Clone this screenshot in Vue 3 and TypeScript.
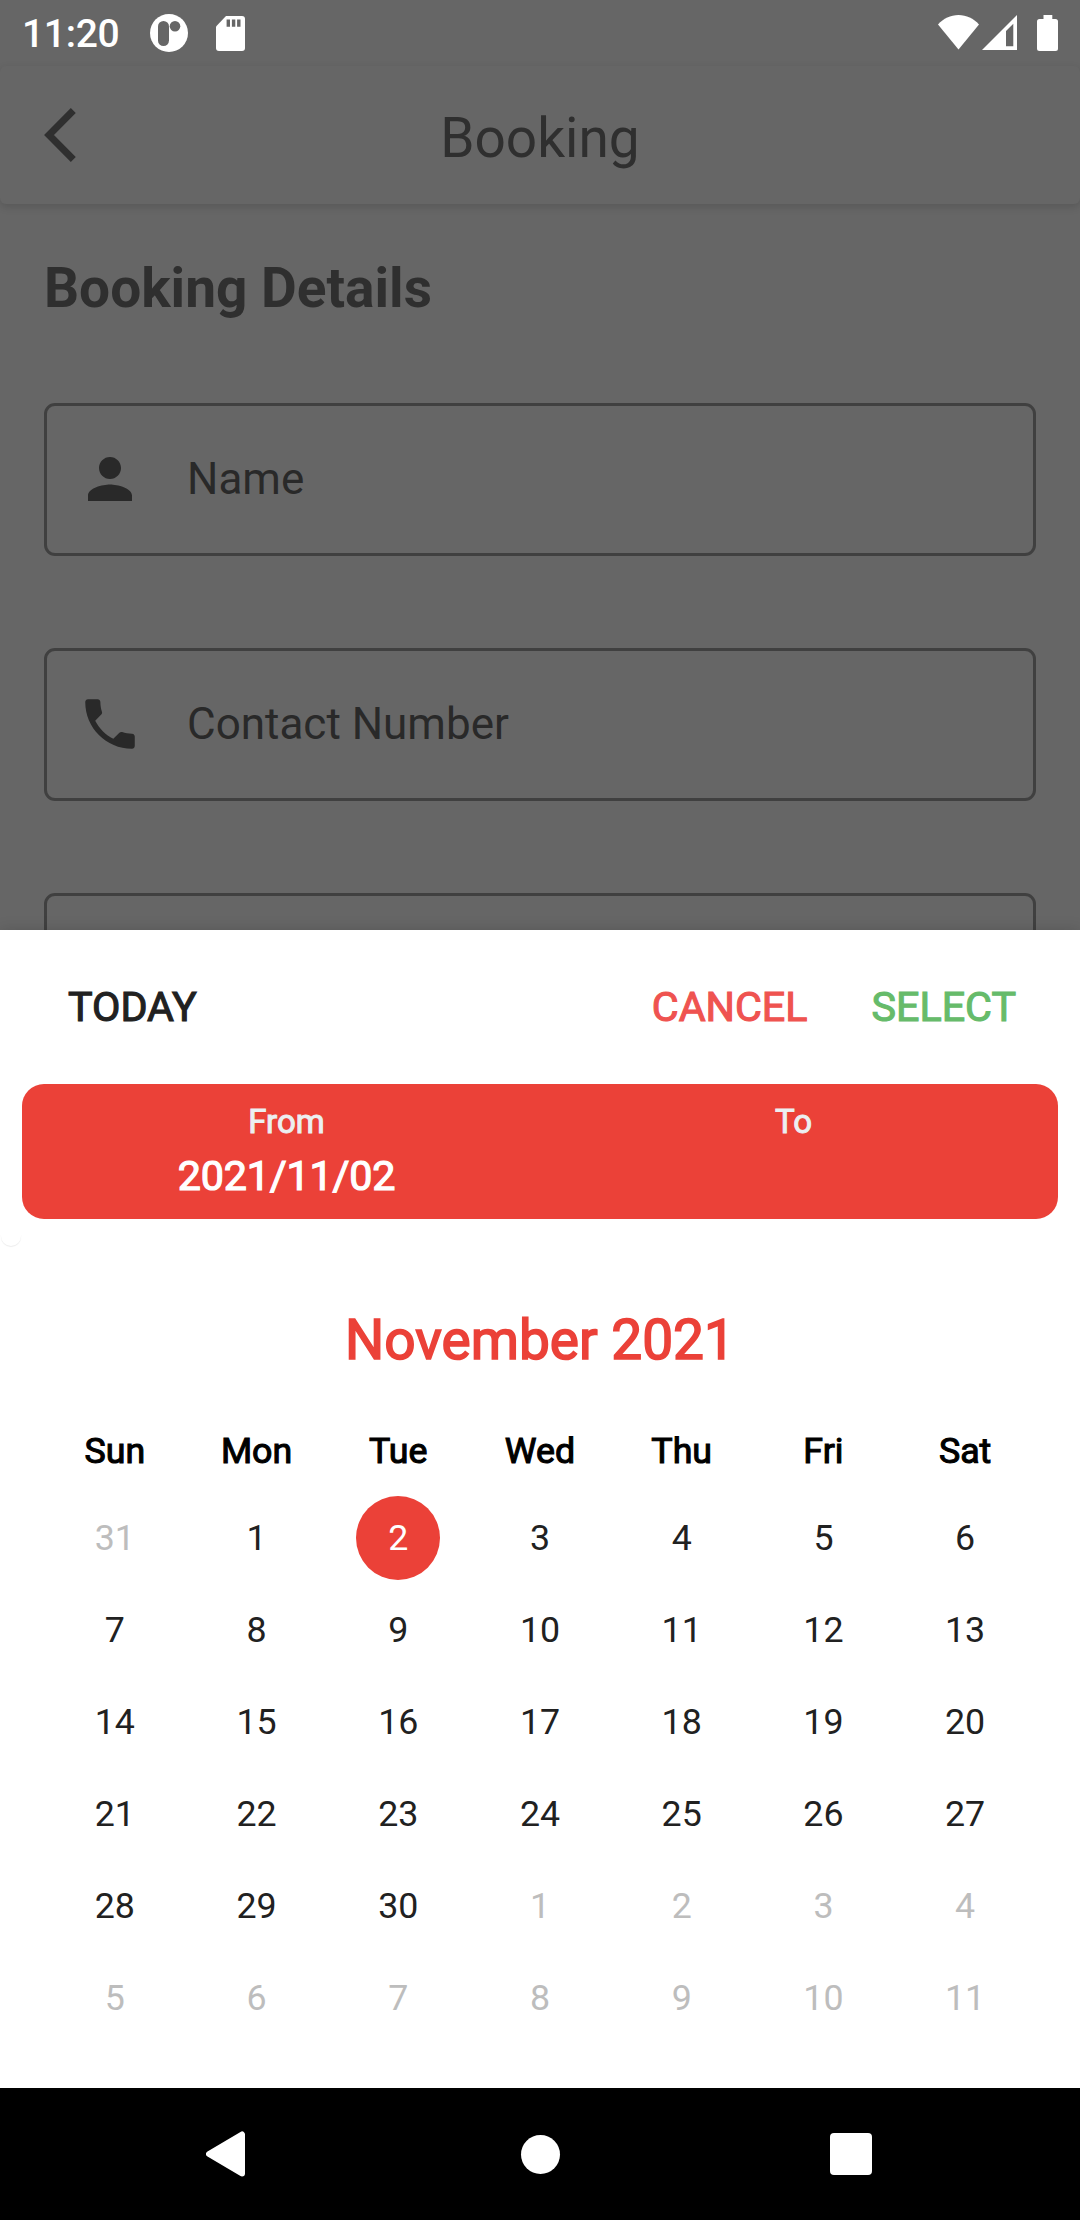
<script setup lang="ts">
interface Day {
  label: number
  muted?: boolean
  selected?: boolean
}

const weekdays: string[] = ['Sun', 'Mon', 'Tue', 'Wed', 'Thu', 'Fri', 'Sat']

const leading: Day[] = [{ label: 31, muted: true }]
const current: Day[] = Array.from({ length: 30 }, (_, i) => ({ label: i + 1, selected: i + 1 === 2 }))
const trailing: Day[] = Array.from({ length: 11 }, (_, i) => ({ label: i + 1, muted: true }))
const days: Day[] = [...leading, ...current, ...trailing]
</script>

<template>
  <div class="screen">
    <div class="status">
      <span class="time">11:20</span>
      <svg class="app-dot" width="38" height="38" viewBox="0 0 38 38">
        <circle cx="19" cy="19" r="19" fill="#fff" />
        <rect x="8" y="7" width="11" height="25" rx="5.5" fill="#666" />
        <circle cx="25" cy="12.3" r="5.3" fill="#666" />
      </svg>
      <svg class="sd" width="29" height="35" viewBox="0 0 29 35">
        <path d="M10 0H26a3 3 0 0 1 3 3V32a3 3 0 0 1-3 3H3a3 3 0 0 1-3-3V10.500Z" fill="#fff" />
        <path d="M10.600 3.500h3.400v7.300h-3.400zM15.900 3.500h3.400v7.300h-3.400zM21.100 3.500h3.400v7.300h-3.400z" fill="#666" />
      </svg>
      <span class="spacer"></span>
      <svg class="wifi" width="41" height="35" viewBox="0 0 41 35">
        <path d="M0 9.500C5.500 3.500 12.500 0 20.500 0S35.500 3.500 41 9.500L20.500 34.500Z" fill="#fff" />
      </svg>
      <svg class="signal" width="35" height="35" viewBox="0 0 35 35">
        <path fill-rule="evenodd" d="M35 0V35H0ZM31.300 8.800L24 16.100V31.200H31.300Z" fill="#fff" />
      </svg>
      <svg class="battery" width="21" height="36" viewBox="0 0 21 36">
        <path d="M6.500 0H15.300V4H18.500A2.500 2.500 0 0 1 21 6.500V33.500A2.500 2.500 0 0 1 18.500 36H2.500A2.500 2.500 0 0 1 0 33.500V6.500A2.500 2.500 0 0 1 2.500 4H6.500Z" fill="#fff" />
      </svg>
    </div>

    <header class="header">
      <svg class="back" width="32" height="54" viewBox="0 0 32 54">
        <path d="M29.300 2.500L5 27L29.300 51.500" fill="none" stroke="#2f2f2f" stroke-width="7" />
      </svg>
      <h1 class="title">Booking</h1>
    </header>

    <main class="form">
      <h2 class="heading">Booking Details</h2>
      <div class="field">
        <svg width="66" height="66" viewBox="0 0 24 24" fill="#292929">
          <path d="M12 12c2.210 0 4-1.790 4-4s-1.790-4-4-4-4 1.790-4 4 1.790 4 4 4zm0 2c-2.670 0-8 1.340-8 4v2h16v-2c0-2.660-5.330-4-8-4z" />
        </svg>
        <span>Name</span>
      </div>
      <div class="field">
        <svg width="66" height="66" viewBox="0 0 24 24" fill="#292929">
          <path d="M6.620 10.790c1.440 2.830 3.760 5.140 6.590 6.590l2.200-2.200c.27-.27.67-.36 1.020-.24 1.120.37 2.330.57 3.570.57.55 0 1 .45 1 1V20c0 .55-.45 1-1 1-9.390 0-17-7.610-17-17 0-.55.45-1 1-1h3.500c.55 0 1 .45 1 1 0 1.250.2 2.450.57 3.570.11.35.03.74-.25 1.020l-2.200 2.200z" />
        </svg>
        <span>Contact Number</span>
      </div>
      <div class="field"></div>
    </main>

    <section class="sheet">
      <div class="actions">
        <span class="today">TODAY</span>
        <span class="cancel">CANCEL</span>
        <span class="select">SELECT</span>
      </div>
      <div class="range">
        <div class="side">
          <span class="side-label">From</span>
          <span class="side-date">2021/11/02</span>
        </div>
        <div class="side">
          <span class="side-label">To</span>
        </div>
      </div>
      <div class="nub"></div>
      <div class="month">November 2021</div>
      <div class="week">
        <span v-for="d in weekdays" :key="d">{{ d }}</span>
      </div>
      <div class="days">
        <div v-for="(d, i) in days" :key="i" class="cell">
          <span class="day" :class="{ muted: d.muted, selected: d.selected }">{{ d.label }}</span>
        </div>
      </div>
    </section>

    <nav class="nav">
      <svg width="40" height="46" viewBox="0 0 40 46">
        <path d="M36 3.500V42.500L3 23Z" fill="#fff" stroke="#fff" stroke-width="6" stroke-linejoin="round" />
      </svg>
      <span class="home"></span>
      <span class="recent"></span>
    </nav>
  </div>
</template>

<style>
body {
  margin: 0;
  background: #fff;
}
</style>

<style scoped>
.screen {
  width: 1080px;
  height: 2220px;
  display: flex;
  flex-direction: column;
  overflow: hidden;
  background: #666;
  font-family: Roboto, "Liberation Sans", sans-serif;
}

.status {
  height: 66px;
  flex: none;
  display: flex;
  align-items: flex-start;
  color: #fff;
}
.time {
  width: 127px;
  padding-left: 22px;
  font-size: 39px;
  font-weight: 500;
  line-height: 69px;
  letter-spacing: -0.3px;
  box-sizing: border-box;
}
.app-dot { margin: 14px 0 0 23px; }
.sd { margin: 16px 0 0 28px; }
.spacer { flex: 1; }
.wifi { margin-top: 15px; }
.signal { margin: 15px 0 0 3px; }
.battery { margin: 15px 22px 0 20px; }

.header {
  height: 138px;
  flex: none;
  display: grid;
  grid-template-columns: 1fr auto 1fr;
  align-items: center;
  border-radius: 6px;
  background: #666;
  box-shadow: 0 3px 8px rgba(0, 0, 0, 0.14);
}
.back { margin-left: 44px; }
.title {
  margin: 0;
  padding-top: 6px;
  font-size: 55px;
  font-weight: 400;
  line-height: 64px;
  color: #2f2f2f;
}

.form {
  height: 726px;
  flex: none;
  box-sizing: border-box;
  padding: 52px 44px 0;
  overflow: hidden;
}
.heading {
  margin: 0 0 83px;
  font-size: 55px;
  font-weight: 700;
  line-height: 64px;
  color: #2f2f2f;
}
.field {
  height: 153px;
  margin-bottom: 92px;
  box-sizing: border-box;
  display: flex;
  align-items: center;
  gap: 44px;
  padding: 0 0 1px 30px;
  border: 3px solid #404040;
  border-radius: 11px;
  font-size: 44px;
  line-height: 52px;
  color: #292929;
}

.sheet {
  height: 1158px;
  flex: none;
  position: relative;
  background: #fff;
  box-shadow: 0 0 14px rgba(0, 0, 0, 0.15);
}
.actions {
  height: 154px;
  display: flex;
  align-items: center;
  padding: 0 64px 0 68px;
  font-size: 41.250px;
  -webkit-text-stroke: 1.100px currentColor;
}
.today { flex: 1; color: #212121; }
.cancel { color: #ef5350; }
.select { margin-left: 64px; color: #66bb6a; }

.range {
  height: 135px;
  margin: 0 22px;
  padding: 0 11px;
  box-sizing: border-box;
  display: flex;
  border-radius: 22px;
  background: #eb4138;
}
.side {
  flex: 1;
  display: flex;
  flex-direction: column;
  align-items: center;
  padding-top: 18px;
}
.side-label {
  font-size: 33px;
  line-height: 40px;
  color: #eceff1;
  -webkit-text-stroke: 1px currentColor;
}
.side-date {
  margin-top: 9px;
  font-size: 41.250px;
  line-height: 50px;
  letter-spacing: -0.2px;
  color: #fff;
  -webkit-text-stroke: 1.200px currentColor;
}
.nub {
  width: 20px;
  height: 27px;
  margin-left: 1px;
  border-radius: 0 0 10px 10px;
  box-shadow: 0 1px 1px rgba(0, 0, 0, 0.08);
  clip-path: inset(16px -2px -3px -2px);
}
.month {
  margin-top: 24px;
  height: 140px;
  text-align: center;
  font-size: 55px;
  line-height: 140px;
  margin-bottom: 20px;
  color: #eb4138;
  -webkit-text-stroke: 1.600px currentColor;
}
.week,
.days {
  display: grid;
  grid-template-columns: repeat(7, 1fr);
  margin: 0 44px;
  text-align: center;
  font-size: 35.750px;
}
.week {
  line-height: 42px;
  margin-bottom: 20px;
  color: #000;
  -webkit-text-stroke: 1.100px currentColor;
}
.cell {
  height: 92px;
  display: flex;
  align-items: center;
  justify-content: center;
}
.day {
  width: 84px;
  line-height: 84px;
  border-radius: 50%;
  color: #212121;
}
.muted { color: #bdbdbd; }
.selected {
  color: #fff;
  background: #eb4138;
}

.nav {
  height: 132px;
  flex: none;
  position: relative;
  box-sizing: border-box;
  display: flex;
  align-items: center;
  justify-content: space-between;
  padding: 0 208px 0 206px;
  background: #000;
}
.home {
  width: 39px;
  height: 39px;
  margin-left: 5px;
  border-radius: 50%;
  background: #fff;
}
.recent {
  width: 42px;
  height: 42px;
  border-radius: 4px;
  background: #fff;
}
</style>
